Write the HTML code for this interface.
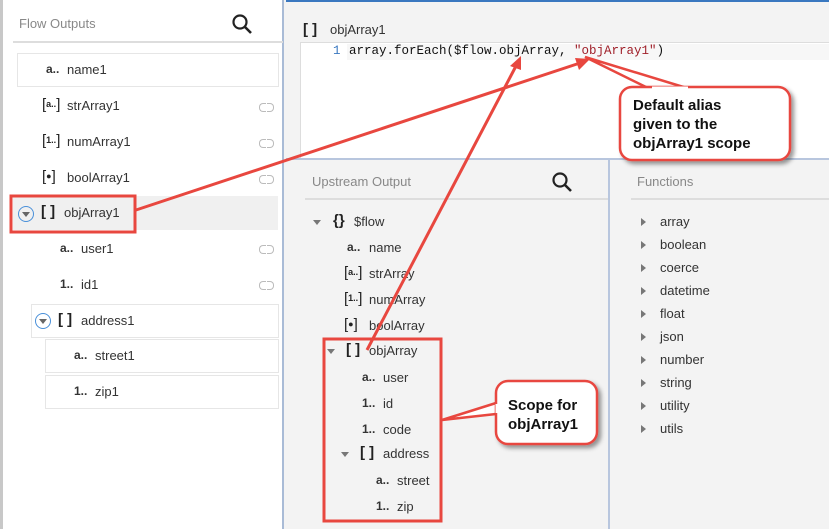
<!DOCTYPE html>
<html><head><meta charset="utf-8"><style>
*{margin:0;padding:0;box-sizing:border-box}
body{width:829px;height:529px;overflow:hidden;background:#f3f3f3;font-family:"Liberation Sans",sans-serif;font-size:13px;color:#333;position:relative}
.abs{position:absolute}
.left{left:0;top:0;width:284px;height:529px;background:#fff;border-left:3px solid #c8c8c8;border-right:2px solid #a9bbd6}
.t{position:absolute;white-space:nowrap}
.ic{position:absolute;font-weight:bold;font-size:12px;white-space:nowrap}
.box{position:absolute;border:1px solid #e6e6e6}
.link{position:absolute;width:16px;height:8px}
.link:before,.link:after{content:"";position:absolute;top:0;width:6px;height:7px;border:1px solid #bbb}
.link:before{left:0;border-right:none;border-radius:4px 0 0 4px}
.link:after{left:8px;border-left:none;border-radius:0 4px 4px 0}
.tri{position:absolute;width:0;height:0;border-left:4px solid transparent;border-right:4px solid transparent;border-top:5px solid #777}
.rtri{position:absolute;width:0;height:0;border-top:4px solid transparent;border-bottom:4px solid transparent;border-left:5px solid #777}
.br{position:absolute;font-weight:bold;font-size:15px;white-space:nowrap;color:#222}
.bi{position:absolute;font-size:15px;white-space:nowrap;color:#222}
.bi span{font-size:9px;font-weight:bold;vertical-align:2px}
.circ{position:absolute;width:16px;height:16px;border:1.5px solid #4a90d9;border-radius:50%}
.circ:after{content:"";position:absolute;left:3px;top:5px;border-left:4px solid transparent;border-right:4px solid transparent;border-top:5px solid #666}
.hdr{color:#888;font-size:13px}
</style></head><body>
<div class="abs left"></div>
<div class="abs" style="left:286px;top:0;width:543px;height:2px;background:#3a78c0"></div>
<!-- left panel -->
<div class="t hdr" style="left:19px;top:16px">Flow Outputs</div>
<svg class="abs" style="left:231px;top:13px" width="22" height="22"><circle cx="9" cy="9" r="6.5" fill="none" stroke="#222" stroke-width="2.2"/><line x1="14" y1="14" x2="20" y2="20" stroke="#222" stroke-width="2.6"/></svg>
<div class="abs" style="left:13px;top:41px;width:270px;height:2px;background:#ddd"></div>
<div class="box" style="left:17px;top:53px;width:262px;height:34px"></div>
<div class="ic" style="left:46px;top:62px">a..</div><div class="t" style="left:67px;top:62px">name1</div>
<div class="bi" style="left:42px;top:96px">[<span>a..</span>]</div><div class="t" style="left:67px;top:98px">strArray1</div><div class="link" style="left:259px;top:103px"></div>
<div class="bi" style="left:42px;top:132px">[<span>1..</span>]</div><div class="t" style="left:67px;top:134px">numArray1</div><div class="link" style="left:259px;top:139px"></div>
<div class="bi" style="left:42px;top:168px">[<span>●</span>]</div><div class="t" style="left:67px;top:170px">boolArray1</div><div class="link" style="left:259px;top:175px"></div>
<div class="abs" style="left:13px;top:196px;width:265px;height:34px;background:#f0f0f0"></div>
<div class="circ" style="left:18px;top:206px"></div>
<div class="br" style="left:41px;top:203px">[ ]</div><div class="t" style="left:64px;top:205px">objArray1</div>
<div class="ic" style="left:60px;top:241px">a..</div><div class="t" style="left:81px;top:241px">user1</div><div class="link" style="left:259px;top:245px"></div>
<div class="ic" style="left:60px;top:277px">1..</div><div class="t" style="left:81px;top:277px">id1</div><div class="link" style="left:259px;top:281px"></div>
<div class="box" style="left:31px;top:304px;width:248px;height:34px"></div>
<div class="circ" style="left:35px;top:313px"></div>
<div class="br" style="left:58px;top:311px">[ ]</div><div class="t" style="left:81px;top:313px">address1</div>
<div class="box" style="left:45px;top:339px;width:234px;height:34px"></div>
<div class="ic" style="left:74px;top:348px">a..</div><div class="t" style="left:95px;top:348px">street1</div>
<div class="box" style="left:45px;top:375px;width:234px;height:34px"></div>
<div class="ic" style="left:74px;top:384px">1..</div><div class="t" style="left:95px;top:384px">zip1</div>
<!-- editor -->
<div class="br" style="left:303px;top:21px">[ ]</div><div class="t" style="left:330px;top:22px">objArray1</div>
<div class="abs" style="left:300px;top:42px;width:529px;height:116px;background:#fff;border-top:1px solid #ddd;border-left:1px solid #ddd"></div>
<div class="abs" style="left:347px;top:44px;width:482px;height:16px;background:#f7f7f7"></div>
<div class="t" style="left:333px;top:44px;font-family:'Liberation Mono',monospace;font-size:12.5px;color:#3a78c0">1</div>
<div class="t" style="left:349px;top:44px;font-family:'Liberation Mono',monospace;font-size:12.5px;color:#111">array.forEach($flow.objArray, <span style="color:#a0202a">"objArray1"</span>)</div>
<div class="abs" style="left:286px;top:158px;width:543px;height:2px;background:#b8c6de"></div>
<div class="abs" style="left:608px;top:160px;width:2px;height:369px;background:#b8c6de"></div>
<!-- upstream -->
<div class="t hdr" style="left:312px;top:174px">Upstream Output</div>
<svg class="abs" style="left:551px;top:171px" width="22" height="22"><circle cx="9" cy="9" r="6.5" fill="none" stroke="#222" stroke-width="2.2"/><line x1="14" y1="14" x2="20" y2="20" stroke="#222" stroke-width="2.6"/></svg>
<div class="abs" style="left:305px;top:198px;width:303px;height:2px;background:#ddd"></div>
<div class="tri" style="left:313px;top:220px"></div><div class="br" style="left:333px;top:212px">{}</div><div class="t" style="left:354px;top:214px">$flow</div>
<div class="ic" style="left:347px;top:240px">a..</div><div class="t" style="left:369px;top:240px">name</div>
<div class="bi" style="left:344px;top:264px">[<span>a..</span>]</div><div class="t" style="left:369px;top:266px">strArray</div>
<div class="bi" style="left:344px;top:290px">[<span>1..</span>]</div><div class="t" style="left:369px;top:292px">numArray</div>
<div class="bi" style="left:344px;top:316px">[<span>●</span>]</div><div class="t" style="left:369px;top:318px">boolArray</div>
<div class="tri" style="left:327px;top:349px"></div><div class="br" style="left:346px;top:341px">[ ]</div><div class="t" style="left:369px;top:343px">objArray</div>
<div class="ic" style="left:362px;top:370px">a..</div><div class="t" style="left:383px;top:370px">user</div>
<div class="ic" style="left:362px;top:396px">1..</div><div class="t" style="left:383px;top:396px">id</div>
<div class="ic" style="left:362px;top:422px">1..</div><div class="t" style="left:383px;top:422px">code</div>
<div class="tri" style="left:341px;top:452px"></div><div class="br" style="left:360px;top:444px">[ ]</div><div class="t" style="left:383px;top:446px">address</div>
<div class="ic" style="left:376px;top:473px">a..</div><div class="t" style="left:397px;top:473px">street</div>
<div class="ic" style="left:376px;top:499px">1..</div><div class="t" style="left:397px;top:499px">zip</div>
<!-- functions -->
<div class="t hdr" style="left:637px;top:174px">Functions</div>
<div class="abs" style="left:631px;top:198px;width:198px;height:2px;background:#ddd"></div>
<div class="rtri" style="left:641px;top:218px"></div><div class="t" style="left:660px;top:214px">array</div>
<div class="rtri" style="left:641px;top:241px"></div><div class="t" style="left:660px;top:237px">boolean</div>
<div class="rtri" style="left:641px;top:264px"></div><div class="t" style="left:660px;top:260px">coerce</div>
<div class="rtri" style="left:641px;top:287px"></div><div class="t" style="left:660px;top:283px">datetime</div>
<div class="rtri" style="left:641px;top:310px"></div><div class="t" style="left:660px;top:306px">float</div>
<div class="rtri" style="left:641px;top:333px"></div><div class="t" style="left:660px;top:329px">json</div>
<div class="rtri" style="left:641px;top:356px"></div><div class="t" style="left:660px;top:352px">number</div>
<div class="rtri" style="left:641px;top:379px"></div><div class="t" style="left:660px;top:375px">string</div>
<div class="rtri" style="left:641px;top:402px"></div><div class="t" style="left:660px;top:398px">utility</div>
<div class="rtri" style="left:641px;top:425px"></div><div class="t" style="left:660px;top:421px">utils</div>
<!-- annotations -->
<svg class="abs" style="left:0;top:0" width="829" height="529">
<defs><filter id="sh" x="-20%" y="-20%" width="150%" height="150%"><feDropShadow dx="3" dy="3" stdDeviation="2" flood-color="#000" flood-opacity="0.4"/></filter></defs>
<rect x="11" y="196" width="124" height="36" fill="none" stroke="#e8473f" stroke-width="3"/>
<rect x="324" y="339" width="117" height="182" fill="none" stroke="#e8473f" stroke-width="3"/>
<line x1="136" y1="210" x2="580" y2="63" stroke="#e8473f" stroke-width="3"/>
<polygon points="590,59 575,58 579,70" fill="#e8473f"/>
<line x1="367" y1="350" x2="516" y2="66" stroke="#e8473f" stroke-width="3"/>
<polygon points="521,56 510,66 521,70" fill="#e8473f"/>
<path d="M650,89 L585,57 L690,89" fill="#fff" stroke="#e8473f" stroke-width="2.5"/>
<rect x="620" y="87" width="170" height="73" rx="12" fill="#fff" stroke="#e8473f" stroke-width="2.5" filter="url(#sh)"/>
<path d="M652,88 L688,88" stroke="#fff" stroke-width="3"/>
<path d="M496,403 L442,420 L496,414" fill="#fff" stroke="#e8473f" stroke-width="2.5"/>
<rect x="496" y="381" width="101" height="63" rx="12" fill="#fff" stroke="#e8473f" stroke-width="2.5" filter="url(#sh)"/>
<path d="M497,404 L497,413" stroke="#fff" stroke-width="3"/>
<g font-family="Liberation Sans,sans-serif" font-weight="bold" font-size="15" fill="#111">
<text x="633" y="110">Default alias</text><text x="633" y="129">given to the</text><text x="633" y="148">objArray1 scope</text>
<text x="508" y="410">Scope for</text><text x="508" y="429">objArray1</text>
</g>
</svg>
</body></html>
